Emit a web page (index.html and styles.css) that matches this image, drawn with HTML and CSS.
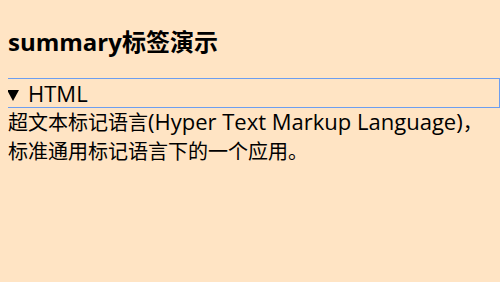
FILE: index.html
```html
<!DOCTYPE html>
<html>
<head>
    <title>summary标签演示</title>
    <link rel="stylesheet" href="styles.css">
</head>
<body>
    <h2>summary标签演示</h2>
    <details open>
        <summary class="focused"><span class="lat">HTML</span></summary>
        <p>超文本标记语言<span class="lat">(Hyper Text Markup Language)</span>，标准通用标记语言下的一个应用。</p>
    </details>
</body>
</html>
```

FILE: styles.css
```css
body {
    margin: 8px 0 8px 8px;
    background-color: #ffe4c4;
    font-family: "Noto Sans CJK SC", sans-serif;
    color: #000;
}
h2 {
    font-family: "Open Sans", "Noto Sans CJK SC", sans-serif;
    font-size: 24px;
    font-weight: bold;
    margin: 15px 0 20px;
}
.lat {
    font-family: "Open Sans", sans-serif;
    font-size: 22px;
}
details {
    font-size: 20px;
    margin-top: 21px;
}
summary {
    display: block;
    height: 28px;
    line-height: 28px;
    margin-right: 1px;
    list-style: none;
    cursor: pointer;
}
summary::-webkit-details-marker {
    display: none;
}
summary::before {
    content: "";
    display: inline-block;
    width: 0;
    height: 0;
    border-left: 6.5px solid transparent;
    border-right: 6.5px solid transparent;
    border-top: 11px solid #000;
    margin: 0 9px 0 -1px;
    vertical-align: 1px;
}
summary.focused {
    outline: 1px solid #6d9ef0;
    outline-offset: 0;
}
details p {
    margin: 0;
    padding-right: 8px;
    line-height: 29px;
}
```
